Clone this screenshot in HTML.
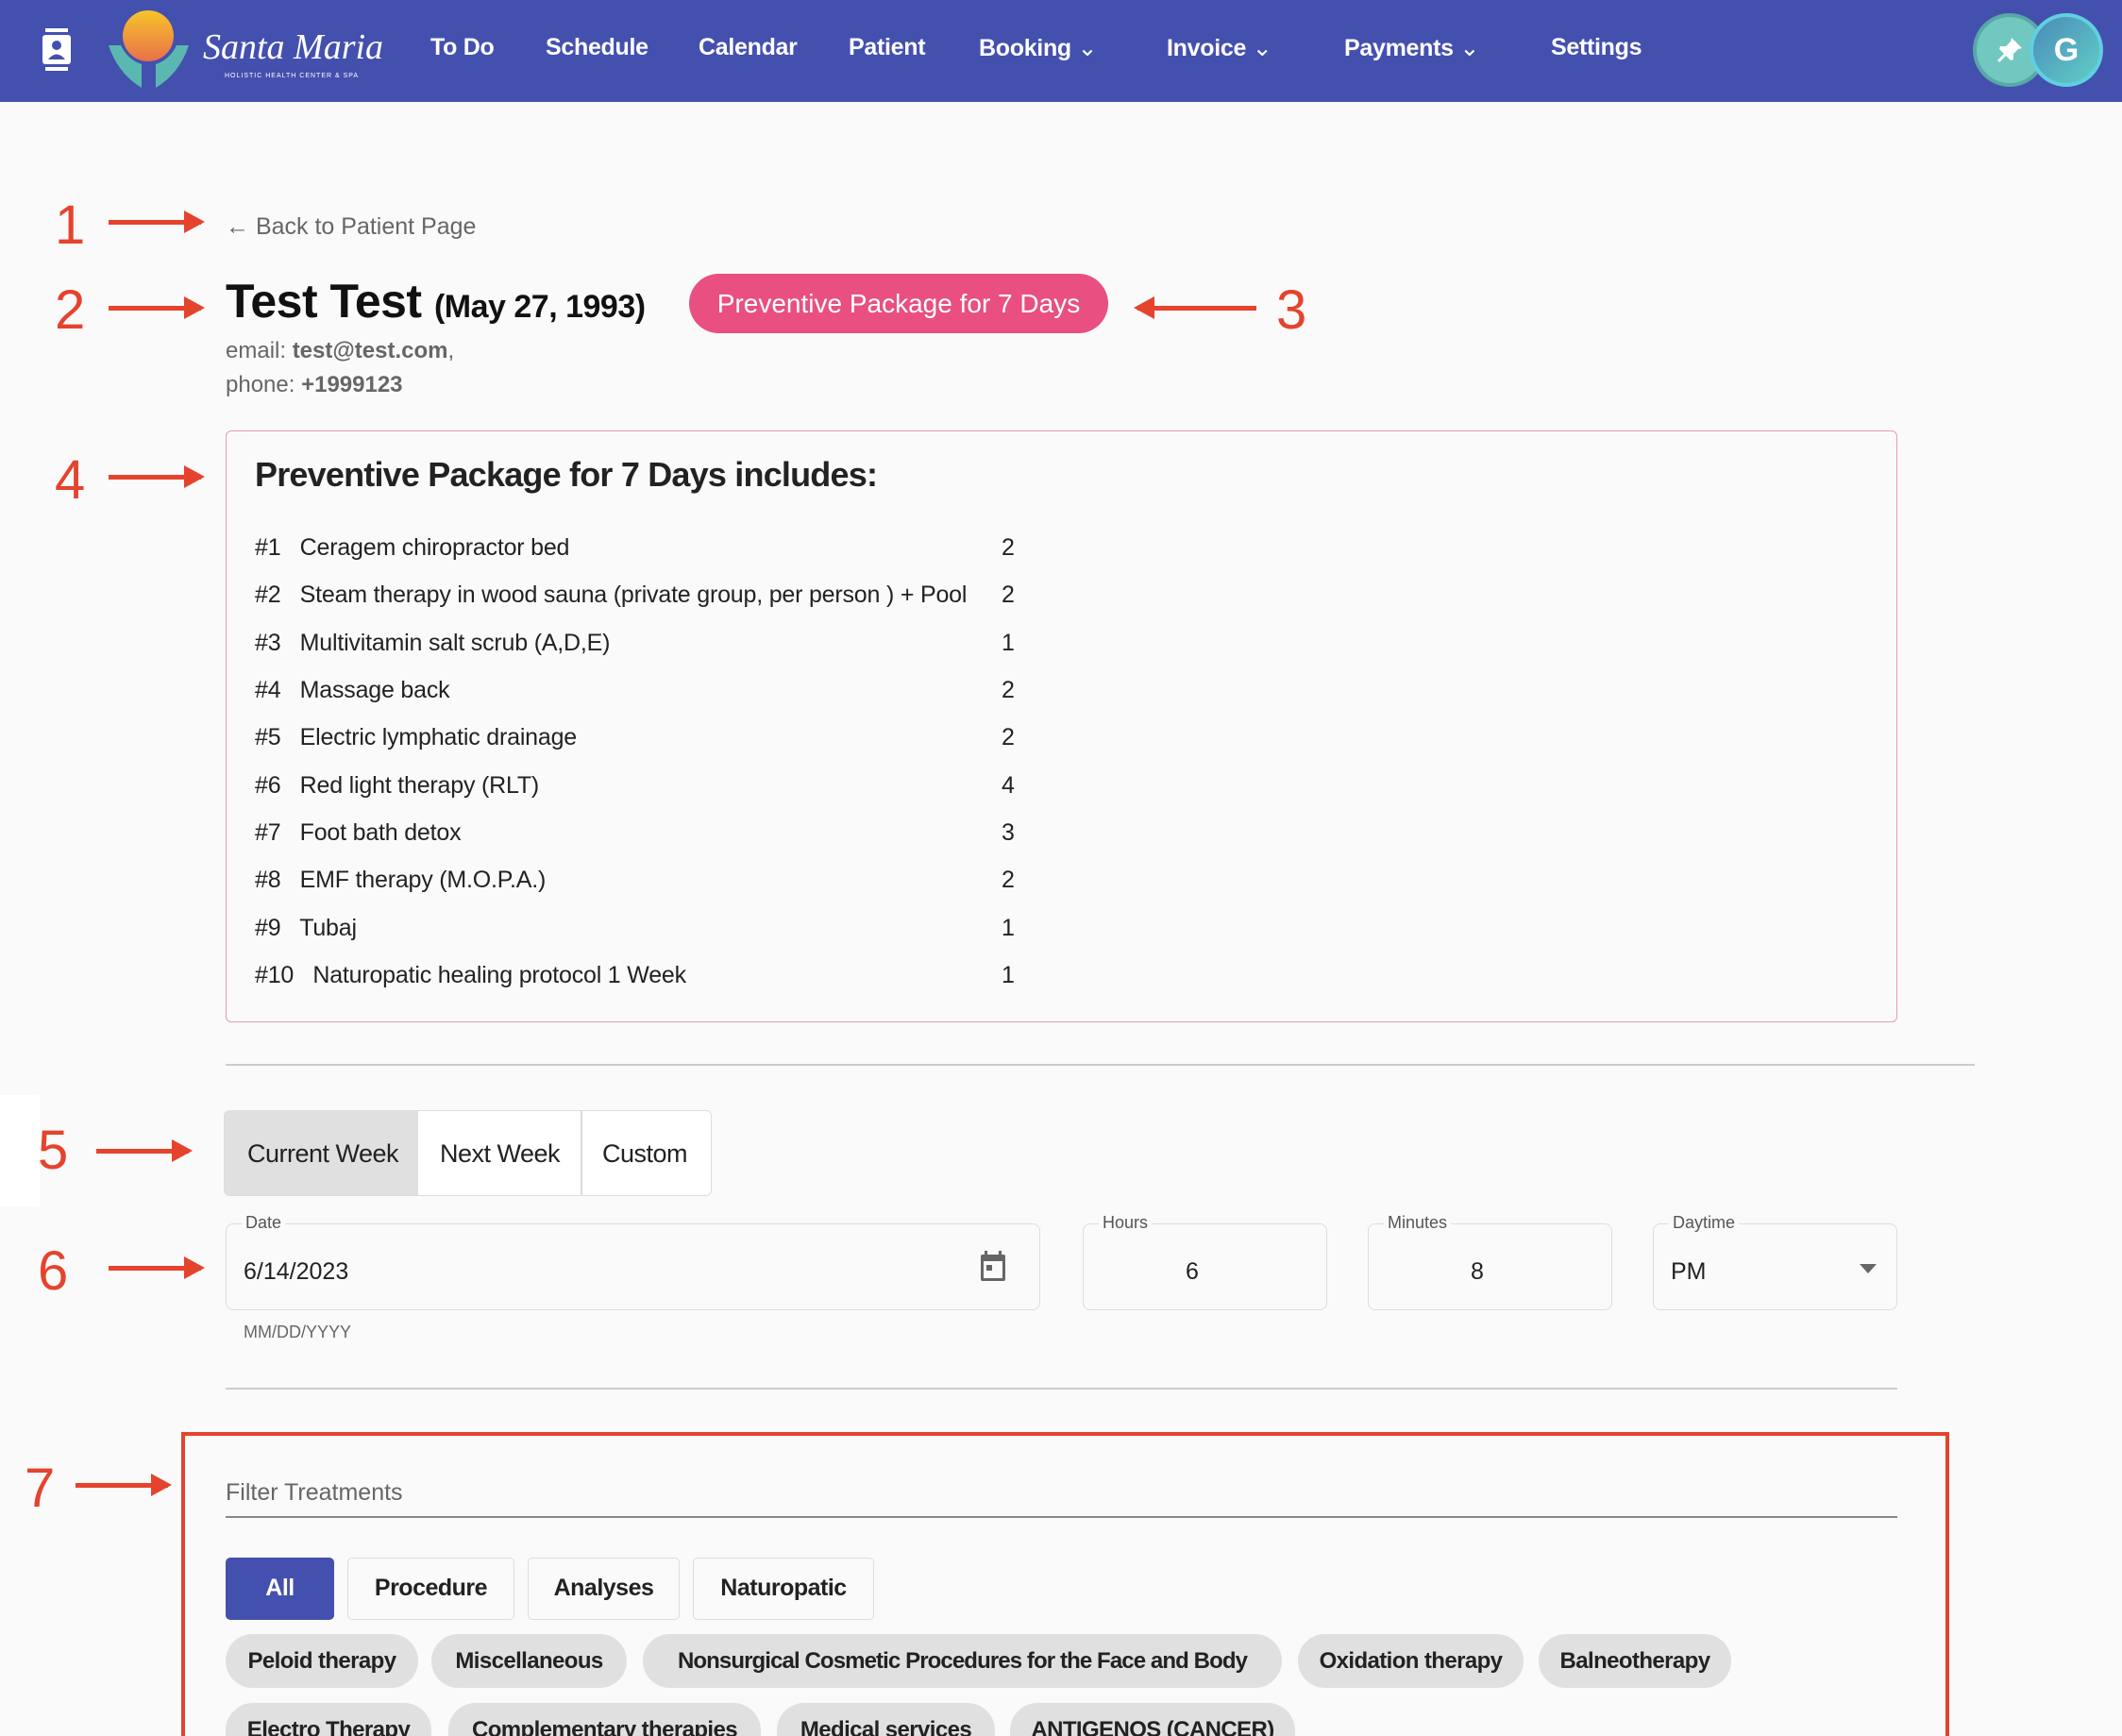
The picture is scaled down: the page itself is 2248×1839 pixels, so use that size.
<!DOCTYPE html>
<html style="height:1839px;overflow:hidden"><head><meta charset="utf-8">
<style>
*{box-sizing:border-box;margin:0;padding:0}
body{width:2248px;height:1839px;overflow:hidden;background:#fafafa;font-family:"Liberation Sans",sans-serif;position:relative;color:#222}
.a{position:absolute;white-space:nowrap}
.nav{position:absolute;left:0;top:0;width:2248px;height:108px;background:#4450ae}
.ni{position:absolute;top:36px;color:#fff;font-size:25px;font-weight:bold;letter-spacing:-0.3px}
.num{position:absolute;color:#e5432d;font-size:58px;line-height:1}
.arr{position:absolute;height:5px;background:#e5432d}
.arr.r::after{content:"";position:absolute;right:-4px;top:-10px;border-left:22px solid #e5432d;border-top:12px solid transparent;border-bottom:12px solid transparent}
.arr.l::before{content:"";position:absolute;left:-4px;top:-10px;border-right:22px solid #e5432d;border-top:12px solid transparent;border-bottom:12px solid transparent}
.row{position:absolute;left:270px;font-size:25px;color:#222;letter-spacing:-0.2px;white-space:nowrap}
.field{position:absolute;border:1.5px solid #ddd;border-radius:8px;height:92px;top:1296px}
.lab{position:absolute;top:-12px;left:16px;background:#fafafa;padding:0 4px;font-size:18px;color:#555}
.fv{position:absolute;top:36px;font-size:25px;color:#222}
.btn{position:absolute;top:1650px;height:66px;border:1.5px solid #ddd;border-radius:5px;background:#fafafa;font-size:25px;font-weight:bold;text-align:center;line-height:63px;color:#222;letter-spacing:-0.5px;white-space:nowrap}
.chip{position:absolute;height:57px;border-radius:29px;background:#e0e0e0;font-size:24px;font-weight:bold;text-align:center;line-height:57px;color:#222;letter-spacing:-0.6px;white-space:nowrap;overflow:hidden}
</style></head><body>
<div class="nav">
  <svg class="a" style="left:42px;top:30px" width="36" height="46" viewBox="0 0 36 46"><rect x="6" y="0" width="24" height="4" fill="#fff"/><rect x="3" y="7" width="30" height="31" rx="3" fill="#fff"/><circle cx="18" cy="18" r="5" fill="#4450ae"/><path d="M9 33 Q18 22 27 33Z" fill="#4450ae"/><rect x="6" y="41" width="24" height="4" fill="#fff"/></svg>
  <svg class="a" style="left:110px;top:8px" width="95" height="90" viewBox="0 0 95 90"><defs><linearGradient id="g" x1="0" y1="0" x2="0" y2="1"><stop offset="0" stop-color="#f7c52a"/><stop offset="1" stop-color="#e9704a"/></linearGradient></defs><circle cx="47" cy="30" r="27" fill="url(#g)"/><path d="M5 40 Q15 70 40 85 L40 60 Q25 55 18 40Z M90 40 Q80 70 55 85 L55 60 Q70 55 77 40Z" fill="#5bb8b0"/></svg>
  <div class="a" style="left:215px;top:28px;color:#fff;font-family:'Liberation Serif',serif;font-style:italic;font-size:38px">Santa Maria</div>
  <div class="a" style="left:238px;top:77px;color:#fff;font-size:7px;letter-spacing:1px">HOLISTIC HEALTH CENTER &amp; SPA</div>
  <div class="ni" style="left:456px">To Do</div>
  <div class="ni" style="left:578px">Schedule</div>
  <div class="ni" style="left:740px">Calendar</div>
  <div class="ni" style="left:899px">Patient</div>
  <div class="ni" style="left:1037px">Booking <span style="font-weight:normal">⌄</span></div>
  <div class="ni" style="left:1236px">Invoice <span style="font-weight:normal">⌄</span></div>
  <div class="ni" style="left:1424px">Payments <span style="font-weight:normal">⌄</span></div>
  <div class="ni" style="left:1643px">Settings</div>
  <div class="a" style="left:2090px;top:14px;width:78px;height:78px;border-radius:50%;border:4px solid #58a8a8;background:#70c8c0"></div>
  <svg class="a" style="left:2113px;top:37px" width="32" height="32" viewBox="0 0 32 32"><path d="M18 3 L29 14 L25 15 L20 20 L20 26 L17 27 L5 15 L6 12 L12 12 L17 7Z" fill="#fff"/><path d="M11 21 L4 28" stroke="#fff" stroke-width="3"/></svg>
  <div class="a" style="left:2150px;top:14px;width:78px;height:78px;border-radius:50%;border:4px solid #60d0e0;background:linear-gradient(135deg,#4a8ab8,#60d0c8);color:#fff;font-size:34px;font-weight:bold;text-align:center;line-height:70px">G</div>
</div>

<div class="num" style="left:58px;top:210px">1</div><div class="arr r" style="left:115px;top:233px;width:98px"></div>
<div class="a" style="left:239px;top:226px;font-size:25px;color:#666">← Back to Patient Page</div>

<div class="num" style="left:58px;top:300px">2</div><div class="arr r" style="left:115px;top:324px;width:98px"></div>
<div class="a" style="left:239px;top:290px;font-size:50px;font-weight:bold;color:#111;letter-spacing:-0.5px">Test Test <span style="font-size:34px">(May 27, 1993)</span></div>
<div class="a" style="left:730px;top:290px;width:444px;height:63px;border-radius:32px;background:#e94f80;color:#fff;font-size:28px;text-align:center;line-height:63px">Preventive Package for 7 Days</div>
<div class="arr l" style="left:1205px;top:324px;width:126px"></div><div class="num" style="left:1352px;top:300px">3</div>
<div class="a" style="left:239px;top:358px;font-size:24px;color:#666">email: <b>test@test.com</b>,</div>
<div class="a" style="left:239px;top:394px;font-size:24px;color:#666">phone: <b>+1999123</b></div>

<div class="num" style="left:58px;top:480px">4</div><div class="arr r" style="left:115px;top:503px;width:98px"></div>
<div class="a" style="left:239px;top:456px;width:1771px;height:627px;border:1.5px solid #e89aac;border-radius:6px"></div>
<div class="a" style="left:270px;top:482px;font-size:36px;font-weight:bold;color:#222;letter-spacing:-0.8px">Preventive Package for 7 Days includes:</div>
<div class="row" style="top:566px">#1&nbsp;&nbsp; Ceragem chiropractor bed</div><div class="row" style="top:566px;left:1061px">2</div>
<div class="row" style="top:616px">#2&nbsp;&nbsp; Steam therapy in wood sauna (private group, per person ) + Pool</div><div class="row" style="top:616px;left:1061px">2</div>
<div class="row" style="top:667px">#3&nbsp;&nbsp; Multivitamin salt scrub (A,D,E)</div><div class="row" style="top:667px;left:1061px">1</div>
<div class="row" style="top:717px">#4&nbsp;&nbsp; Massage back</div><div class="row" style="top:717px;left:1061px">2</div>
<div class="row" style="top:767px">#5&nbsp;&nbsp; Electric lymphatic drainage</div><div class="row" style="top:767px;left:1061px">2</div>
<div class="row" style="top:818px">#6&nbsp;&nbsp; Red light therapy (RLT)</div><div class="row" style="top:818px;left:1061px">4</div>
<div class="row" style="top:868px">#7&nbsp;&nbsp; Foot bath detox</div><div class="row" style="top:868px;left:1061px">3</div>
<div class="row" style="top:918px">#8&nbsp;&nbsp; EMF therapy (M.O.P.A.)</div><div class="row" style="top:918px;left:1061px">2</div>
<div class="row" style="top:969px">#9&nbsp;&nbsp; Tubaj</div><div class="row" style="top:969px;left:1061px">1</div>
<div class="row" style="top:1019px">#10&nbsp;&nbsp; Naturopatic healing protocol 1 Week</div><div class="row" style="top:1019px;left:1061px">1</div>

<div class="a" style="left:239px;top:1127px;width:1853px;height:2px;background:#ccc"></div>

<div class="a" style="left:0;top:1160px;width:42px;height:118px;background:#fff"></div>
<div class="num" style="left:40px;top:1190px">5</div><div class="arr r" style="left:102px;top:1217px;width:98px"></div>
<div class="a" style="left:237px;top:1176px;width:517px;height:91px;border:1.5px solid #ddd;border-radius:6px;background:#fff;overflow:hidden">
  <div class="a" style="left:0;top:0;width:205px;height:91px;background:#e0e0e0"></div>
  <div class="a" style="left:377px;top:0;width:1.5px;height:91px;background:#ddd"></div>
  <div class="a" style="left:24px;top:30px;font-size:27px;letter-spacing:-0.5px">Current Week</div>
  <div class="a" style="left:228px;top:30px;font-size:27px;letter-spacing:-0.5px">Next Week</div>
  <div class="a" style="left:400px;top:30px;font-size:27px;letter-spacing:-0.5px">Custom</div>
</div>

<div class="num" style="left:40px;top:1318px">6</div><div class="arr r" style="left:115px;top:1341px;width:98px"></div>
<div class="field" style="left:239px;width:863px"><span class="lab">Date</span><span class="fv" style="left:18px">6/14/2023</span>
<svg class="a" style="left:797px;top:28px" width="30" height="34" viewBox="0 0 30 34"><rect x="6" y="0" width="3" height="6" fill="#666"/><rect x="21" y="0" width="3" height="6" fill="#666"/><rect x="2" y="4" width="26" height="28" rx="2" fill="#666"/><rect x="5" y="11" width="20" height="18" fill="#fafafa"/><rect x="8" y="15" width="6" height="6" fill="#666"/></svg></div>
<div class="field" style="left:1147px;width:259px"><span class="lab">Hours</span><span class="fv" style="left:108px">6</span></div>
<div class="field" style="left:1449px;width:259px"><span class="lab">Minutes</span><span class="fv" style="left:108px">8</span></div>
<div class="field" style="left:1751px;width:259px"><span class="lab">Daytime</span><span class="fv" style="left:18px">PM</span>
<div class="a" style="left:218px;top:42px;border-top:10px solid #666;border-left:9px solid transparent;border-right:9px solid transparent"></div></div>
<div class="a" style="left:258px;top:1401px;font-size:18px;color:#666">MM/DD/YYYY</div>

<div class="a" style="left:239px;top:1470px;width:1771px;height:1.5px;background:#ccc"></div>

<div class="num" style="left:26px;top:1548px">7</div><div class="arr r" style="left:80px;top:1571px;width:98px"></div>
<div class="a" style="left:192px;top:1517px;width:1873px;height:322px;border:4px solid #e5432d;border-bottom:none"></div>
<div class="a" style="left:239px;top:1567px;font-size:25px;color:#666">Filter Treatments</div>
<div class="a" style="left:239px;top:1606px;width:1771px;height:2px;background:#888"></div>

<div class="btn" style="left:239px;width:115px;background:#4450ae;border-color:#4450ae;color:#fff">All</div>
<div class="btn" style="left:368px;width:177px">Procedure</div>
<div class="btn" style="left:559px;width:161px">Analyses</div>
<div class="btn" style="left:734px;width:192px">Naturopatic</div>

<div class="chip" style="top:1731px;left:239px;width:204px">Peloid therapy</div>
<div class="chip" style="top:1731px;left:457px;width:207px">Miscellaneous</div>
<div class="chip" style="top:1731px;left:681px;width:677px;letter-spacing:-0.9px">Nonsurgical Cosmetic Procedures for the Face and Body</div>
<div class="chip" style="top:1731px;left:1375px;width:239px">Oxidation therapy</div>
<div class="chip" style="top:1731px;left:1630px;width:204px">Balneotherapy</div>
<div class="chip" style="top:1804px;left:239px;width:218px;height:35px;border-radius:29px 29px 0 0">Electro Therapy</div>
<div class="chip" style="top:1804px;left:475px;width:331px;height:35px;border-radius:29px 29px 0 0">Complementary therapies</div>
<div class="chip" style="top:1804px;left:823px;width:231px;height:35px;border-radius:29px 29px 0 0">Medical services</div>
<div class="chip" style="top:1804px;left:1070px;width:302px;height:35px;border-radius:29px 29px 0 0">ANTIGENOS (CANCER)</div>
</body></html>
